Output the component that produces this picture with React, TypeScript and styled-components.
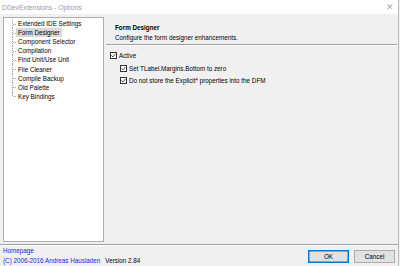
import React from "react";
import styled, { createGlobalStyle } from "styled-components";

const Global = createGlobalStyle`
  html, body { margin: 0; padding: 0; background: #f0f0f0; }
  body { font-family: "Liberation Sans", Arial, sans-serif; }
`;

const Window = styled.div`
  width: 398px;
  height: 266px;
  border-right: 1px solid #b9b9b9;
  display: flex;
  flex-direction: column;
  background: #f0f0f0;
  font-size: 6.3px;
  color: #000;
  overflow: hidden;
`;

const TitleBar = styled.div`
  height: 14px;
  background: #fff;
  display: flex;
  align-items: center;
  justify-content: space-between;
  padding: 0 4px 0 2px;
  color: #9a9a9a;
  font-size: 6.8px;
`;

const Close = styled.span`
  font-size: 8.5px;
  color: #a8a8a8;
  line-height: 1;
`;

const Main = styled.div`
  flex: 1;
  display: flex;
  padding: 3px 0 0 3px;
`;

const Tree = styled.div`
  width: 99px;
  height: 222px;
  background: #fff;
  border: 1px solid #adadad;
  padding-top: 1px;
  box-sizing: content-box;
`;

const TreeRow = styled.div`
  height: 9.1px;
  display: flex;
  align-items: stretch;
  padding-left: 8px;
`;

const Connector = styled.div<{ $last?: boolean }>`
  width: 4px;
  flex: none;
  position: relative;
  &::before {
    content: "";
    position: absolute;
    left: 0;
    top: 0;
    height: ${(p) => (p.$last ? "50%" : "100%")};
    border-left: 1px dotted #a0a0a0;
  }
  &::after {
    content: "";
    position: absolute;
    left: 1px;
    top: 50%;
    width: 3px;
    border-top: 1px dotted #a0a0a0;
  }
`;

const TreeLabel = styled.span<{ $selected?: boolean }>`
  align-self: center;
  padding: 1px 2px;
  line-height: 7px;
  background: ${(p) => (p.$selected ? "#d9d9d9" : "transparent")};
  color: #000;
  white-space: nowrap;
`;

const Panel = styled.div`
  flex: 1;
  display: flex;
  flex-direction: column;
`;

const Header = styled.div`
  height: 27px;
  padding: 4px 0 0 11px;
  box-sizing: border-box;
  display: flex;
  flex-direction: column;
  justify-content: center;
  gap: 2px;
`;

const HeaderTitle = styled.div`
  font-weight: bold;
  line-height: 8px;
`;

const HeaderDesc = styled.div`
  line-height: 8px;
`;

const Separator = styled.div`
  height: 1px;
  background: #a0a0a0;
  border-bottom: 1px solid #fff;
  margin: 0 1px 0 2px;
`;

const Options = styled.div`
  padding: 6px 0 0 6px;
  display: flex;
  flex-direction: column;
  gap: 5.5px;
`;

const CheckRow = styled.label<{ $indent?: number }>`
  display: flex;
  align-items: center;
  gap: 2px;
  padding-left: ${(p) => p.$indent ?? 0}px;
  line-height: 7px;
`;

const Box = styled.span`
  width: 7px;
  height: 7px;
  box-sizing: border-box;
  border: 1px solid #333;
  background: #fff;
  display: flex;
  align-items: center;
  justify-content: center;
`;

const Footer = styled.div`
  border-top: 1px solid #a0a0a0;
  box-shadow: inset 0 1px 0 #fff;
  height: 21px;
  display: flex;
  align-items: center;
  justify-content: space-between;
  padding: 0 3px;
`;

const Info = styled.div`
  display: flex;
  flex-direction: column;
  gap: 2px;
  padding-top: 1px;
`;

const Link = styled.span`
  color: #1a1aee;
  line-height: 8px;
`;

const InfoLine = styled.div`
  display: flex;
  gap: 5px;
`;

const Version = styled.span`
  line-height: 8px;
`;

const Buttons = styled.div`
  display: flex;
  gap: 5px;
  padding-top: 1px;
`;

const Button = styled.button<{ $default?: boolean }>`
  width: 41px;
  height: 13px;
  padding: 0;
  font: inherit;
  font-size: 6.3px;
  color: #000;
  background: #e1e1e1;
  border: 1px solid ${(p) => (p.$default ? "#0078d7" : "#adadad")};
  box-shadow: ${(p) => (p.$default ? "inset 0 0 0 0.5px #0078d7" : "none")};
`;

const Check = () => (
  <svg width="5" height="5" viewBox="0 0 5 5" style={{ display: "block" }}>
    <path d="M0.4 2.4 L1.9 3.9 L4.6 0.9" fill="none" stroke="#333" strokeWidth="0.9" />
  </svg>
);

const items = [
  "Extended IDE Settings",
  "Form Designer",
  "Component Selector",
  "Compilation",
  "Find Unit/Use Unit",
  "File Cleaner",
  "Compile Backup",
  "Old Palette",
  "Key Bindings",
];

export default function App() {
  return (
    <>
      <Global />
      <Window>
        <TitleBar>
          <span>DDevExtensions - Options</span>
          <Close>✕</Close>
        </TitleBar>
        <Main>
          <Tree>
            {items.map((it, i) => (
              <TreeRow key={it}>
                <Connector $last={i === items.length - 1} />
                <TreeLabel $selected={it === "Form Designer"}>{it}</TreeLabel>
              </TreeRow>
            ))}
          </Tree>
          <Panel>
            <Header>
              <HeaderTitle>Form Designer</HeaderTitle>
              <HeaderDesc>Configure the form designer enhancements.</HeaderDesc>
            </Header>
            <Separator />
            <Options>
              <CheckRow>
                <Box><Check /></Box>
                <span>Active</span>
              </CheckRow>
              <CheckRow $indent={10}>
                <Box><Check /></Box>
                <span>Set TLabel.Margins.Bottom to zero</span>
              </CheckRow>
              <CheckRow $indent={10}>
                <Box><Check /></Box>
                <span>Do not store the Explicit* properties into the DFM</span>
              </CheckRow>
            </Options>
          </Panel>
        </Main>
        <Footer>
          <Info>
            <Link>Homepage</Link>
            <InfoLine>
              <Link>(C) 2006-2016 Andreas Hausladen</Link>
              <Version>Version 2.84</Version>
            </InfoLine>
          </Info>
          <Buttons>
            <Button $default>OK</Button>
            <Button>Cancel</Button>
          </Buttons>
        </Footer>
      </Window>
    </>
  );
}
